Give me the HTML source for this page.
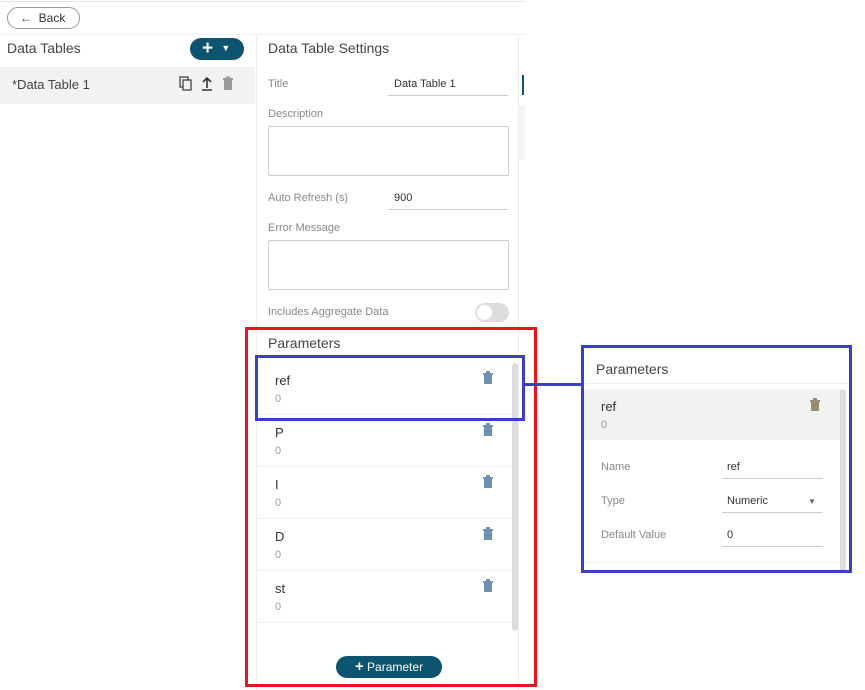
<!DOCTYPE html>
<html><head><meta charset="utf-8"><style>
*{box-sizing:border-box;margin:0;padding:0}
body{width:865px;height:690px;background:#fff;font-family:"Liberation Sans",sans-serif;position:relative;overflow:hidden;color:#333}
.a{position:absolute}
.lbl{font-size:11px;color:#888}
.val{font-size:11px;color:#333}
.ul{position:absolute;height:1px;background:#ccc}
.ta{position:absolute;border:1px solid #ccc;border-radius:2px;background:#fff}
.t{font-size:13px;color:#333}
.z{font-size:11px;color:#999}
.sep{position:absolute;height:1px;background:#eee}
</style></head><body>
<div class="a" style="left:0;top:1px;width:525px;height:1px;background:#e6e6e6"></div>
<div class="a" style="left:7px;top:7px;width:73px;height:22px;border:1px solid #999;border-radius:11px;font-size:12px;line-height:20px;padding-left:12px;color:#333">←&nbsp;&nbsp;Back</div>
<div class="a" style="left:0;top:34px;width:525px;height:1px;background:#eee"></div>
<div class="a" style="left:7px;top:40px;font-size:14px;color:#444">Data Tables</div>
<div class="a" style="left:190px;top:38px;width:54px;height:22px;border-radius:11px;background:#0d5470;color:#fff;font-size:19px;font-weight:bold;line-height:21px;padding-left:12px">+ <span style="font-size:9px;vertical-align:3px;margin-left:3px">▼</span></div>
<div class="a" style="left:0;top:67px;width:255px;height:37px;background:#f2f2f2"></div>
<div class="a" style="left:12px;top:77px;font-size:13px;color:#444">*Data Table 1</div>
<svg class="a" style="left:178px;top:76px" width="60" height="16" viewBox="0 0 60 16">
<rect x="2" y="1" width="8" height="10" fill="none" stroke="#444" stroke-width="1.3"/><rect x="5" y="4" width="8" height="10" fill="#f2f2f2" stroke="#444" stroke-width="1.3"/>
<path d="M29 3 L29 12 M25 6 L29 2 L33 6 M24 14 H34" stroke="#333" stroke-width="1.6" fill="none"/>
<rect x="46" y="4" width="8" height="10" fill="#999"/><rect x="45" y="2" width="10" height="2" fill="#999"/><rect x="48" y="0.5" width="4" height="2" fill="#999"/>
</svg>
<div class="a" style="left:256px;top:35px;width:1px;height:655px;background:#eee"></div>
<div class="a" style="left:518px;top:35px;width:1px;height:655px;background:#eee"></div>
<div class="a" style="left:522px;top:75px;width:2px;height:20px;background:#0d5470"></div>
<div class="a" style="left:519px;top:105px;width:6px;height:55px;background:#f5f5f5"></div>
<div class="a" style="left:268px;top:40px;font-size:14px;color:#444">Data Table Settings</div>
<div class="a lbl" style="left:268px;top:78px">Title</div>
<div class="a val" style="left:394px;top:78px">Data Table 1</div><div class="ul" style="left:388px;top:95px;width:120px"></div>
<div class="a lbl" style="left:268px;top:108px">Description</div>
<div class="ta" style="left:268px;top:126px;width:241px;height:50px"></div>
<div class="a lbl" style="left:268px;top:192px">Auto Refresh (s)</div>
<div class="a val" style="left:394px;top:192px">900</div><div class="ul" style="left:388px;top:209px;width:120px"></div>
<div class="a lbl" style="left:268px;top:222px">Error Message</div>
<div class="ta" style="left:268px;top:240px;width:241px;height:50px"></div>
<div class="a lbl" style="left:268px;top:306px">Includes Aggregate Data</div>
<div class="a" style="left:475px;top:303px;width:34px;height:19px;border-radius:10px;background:#ddd"><div style="position:absolute;left:2px;top:2px;width:15px;height:15px;border-radius:50%;background:#fff"></div></div>
<div class="a" style="left:268px;top:335px;font-size:14px;color:#444">Parameters</div>
<div class="a" style="left:512px;top:363px;width:6px;height:268px;background:#ddd;border-radius:3px"></div>
<div class="sep" style="left:258px;top:414px;width:254px"></div>
<div class="sep" style="left:258px;top:466px;width:254px"></div>
<div class="sep" style="left:258px;top:518px;width:254px"></div>
<div class="sep" style="left:258px;top:570px;width:254px"></div>
<div class="sep" style="left:258px;top:622px;width:254px"></div>
<div class="a t" style="left:275px;top:373px">ref</div><div class="a z" style="left:275px;top:393px">0</div>
<div class="a t" style="left:275px;top:425px">P</div><div class="a z" style="left:275px;top:445px">0</div>
<div class="a t" style="left:275px;top:477px">I</div><div class="a z" style="left:275px;top:497px">0</div>
<div class="a t" style="left:275px;top:529px">D</div><div class="a z" style="left:275px;top:549px">0</div>
<div class="a t" style="left:275px;top:581px">st</div><div class="a z" style="left:275px;top:601px">0</div>
<svg class="a" style="left:482px;top:370px" width="12" height="240">
<g fill="#6f8fae"><g id="tr"><rect x="1" y="3" width="10" height="2"/><rect x="4" y="1" width="4" height="2"/><rect x="2" y="5" width="8" height="9"/></g>
<use href="#tr" y="52"/><use href="#tr" y="104"/><use href="#tr" y="156"/><use href="#tr" y="208"/></g></svg>
<div class="a" style="left:336px;top:656px;width:106px;height:22px;border-radius:11px;background:#0d5470;color:#fff;font-size:12px;line-height:22px;text-align:center"><b style="font-size:15px">+</b> Parameter</div>
<div class="a" style="left:245px;top:327px;width:292px;height:360px;border:3px solid #e8141e"></div>
<div class="a" style="left:255px;top:355px;width:270px;height:66px;border:3px solid #3b3fc4"></div>
<div class="a" style="left:524px;top:383px;width:58px;height:3px;background:#3b3fc4"></div>
<div class="a" style="left:581px;top:345px;width:271px;height:228px;border:3px solid #3b3fc4;background:#fff"></div>
<div class="a" style="left:596px;top:361px;font-size:14px;color:#444">Parameters</div>
<div class="a" style="left:584px;top:383px;width:265px;height:1px;background:#eee"></div>
<div class="a" style="left:584px;top:389px;width:256px;height:51px;background:#f2f2f2"></div>
<div class="a" style="left:840px;top:390px;width:6px;height:180px;background:#ddd"></div>
<div class="a t" style="left:601px;top:399px">ref</div><div class="a z" style="left:601px;top:419px">0</div>
<svg class="a" style="left:809px;top:397px" width="12" height="16"><g fill="#9a8a70"><rect x="1" y="3" width="10" height="2"/><rect x="4" y="1" width="4" height="2"/><rect x="2" y="5" width="8" height="9"/></g></svg>
<div class="a lbl" style="left:601px;top:461px">Name</div>
<div class="a val" style="left:727px;top:461px">ref</div><div class="ul" style="left:722px;top:478px;width:101px"></div>
<div class="a lbl" style="left:601px;top:495px">Type</div>
<div class="a val" style="left:727px;top:495px">Numeric</div><div class="a" style="left:808px;top:497px;font-size:8px;color:#666">▼</div><div class="ul" style="left:722px;top:512px;width:101px"></div>
<div class="a lbl" style="left:601px;top:529px">Default Value</div>
<div class="a val" style="left:727px;top:529px">0</div><div class="ul" style="left:722px;top:546px;width:101px"></div>
<div class="a" style="left:584px;top:562px;width:256px;height:1px;background:#eee"></div>
</body></html>
